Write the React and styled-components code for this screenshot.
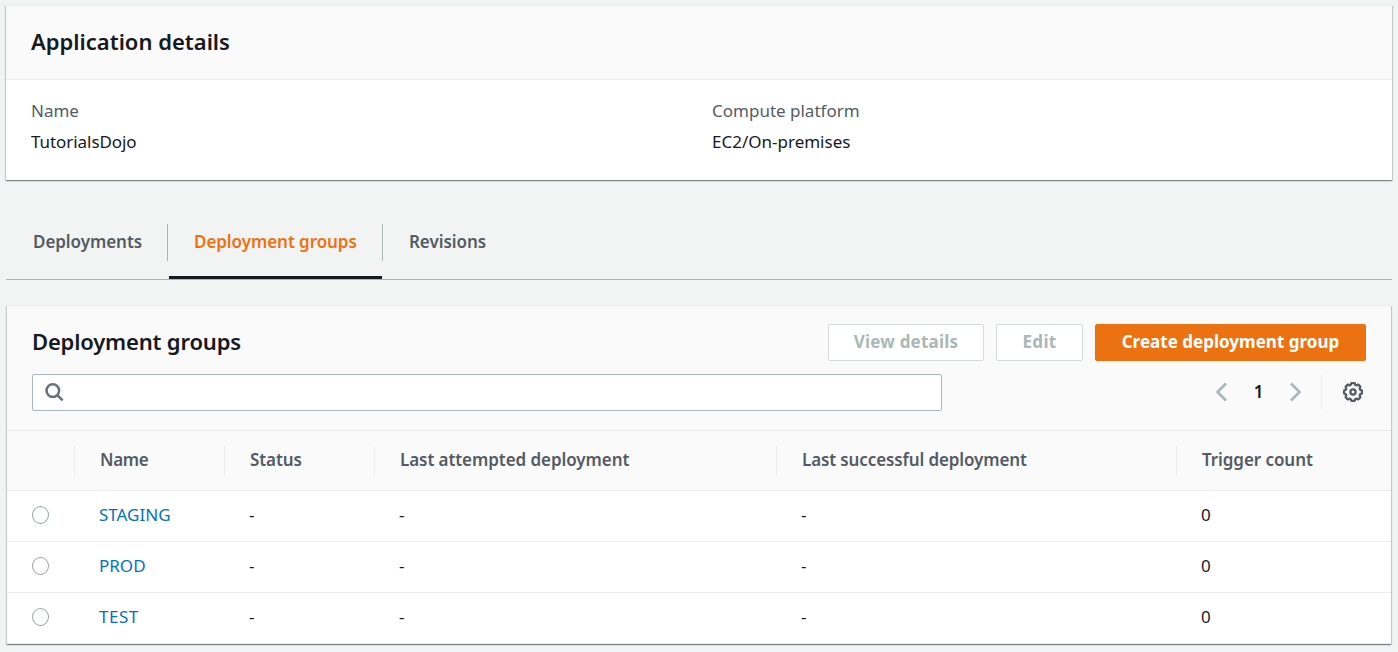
import React from 'react';
import styled, { createGlobalStyle, css } from 'styled-components';

const GlobalStyle = createGlobalStyle`
  *, *::before, *::after { box-sizing: border-box; }
  body {
    margin: 0;
    background: #f2f3f3;
    color: #16191f;
    font-family: "Noto Sans", "Open Sans", sans-serif;
    font-size: 17px;
    line-height: 24px;
  }
`;

const Page = styled.main`
  display: flex;
  flex-direction: column;
  height: 652px;
  padding: 5px 6px 0;
  overflow: hidden;
`;

const Card = styled.section`
  background: #fff;
  border-top: 1px solid #eaeded;
  box-shadow: 0 1px 1px 0 rgba(0, 28, 36, 0.3), 1px 1px 1px 0 rgba(0, 28, 36, 0.15),
    -1px 1px 1px 0 rgba(0, 28, 36, 0.15);
`;

const DetailsCard = styled(Card)`
  height: 175px;
`;

const GroupsCard = styled(Card)`
  height: 339px;
  margin: 25px 1px 0;
`;

const Title = styled.h2`
  margin: 0;
  font-size: 22px;
  line-height: 28px;
  font-weight: 600;
  letter-spacing: ${(p) => p.$tracking || 'normal'};
`;

const DetailsHeader = styled.header`
  height: 74px;
  padding: 21px 25px 0;
  background: #fafafa;
  border-bottom: 1px solid #eaeded;
`;

const DetailsGrid = styled.dl`
  display: grid;
  grid-template-columns: 681px 1fr;
  margin: 0;
  padding: 19px 25px 0;
`;

const Label = styled.dt`
  color: #545b64;
`;

const Value = styled.dd`
  margin: 7px 0 0;
  letter-spacing: ${(p) => p.$tracking || 'normal'};
`;

const TabList = styled.nav`
  display: flex;
  height: 56px;
  margin-top: 44px;
  border-bottom: 1px solid #aab7b8;
`;

const Tab = styled.a`
  width: ${(p) => p.$width}px;
  padding: 6px 0 0 ${(p) => p.$indent}px;
  font-weight: 600;
  letter-spacing: -0.06px;
  white-space: nowrap;
  color: ${(p) => (p.$active ? '#ec7211' : '#545b64')};
  ${(p) => p.$active && css`border-bottom: 3px solid #16191f;`}
`;

const TabDivider = styled.span`
  width: 1px;
  height: 37px;
  margin-right: ${(p) => p.$after || 0}px;
  background: #aab7b8;
`;

const GroupsHeader = styled.header`
  display: flex;
  flex-direction: column;
  gap: 13px;
  height: 125px;
  padding: 18px 25px 0;
  background: #fafafa;
  border-bottom: 1px solid #eaeded;
`;

const HeaderRow = styled.div`
  display: flex;
  justify-content: space-between;
  align-items: center;
  height: 37px;

  ${Title} {
    padding-bottom: 3px;
  }
`;

const Actions = styled.div`
  display: flex;
  gap: 12px;
`;

const Button = styled.button`
  width: ${(p) => p.$width}px;
  height: 37px;
  padding: 0 0 2px;
  border: 1px solid ${(p) => (p.$primary ? '#ec7211' : '#d5dbdb')};
  border-radius: 2px;
  background: ${(p) => (p.$primary ? '#ec7211' : '#fff')};
  color: ${(p) => (p.$primary ? '#fff' : '#aab7b8')};
  font: 700 17px/24px "Noto Sans", "Open Sans", sans-serif;
  letter-spacing: ${(p) => p.$tracking};
  white-space: nowrap;
`;

const Search = styled.label`
  display: flex;
  align-items: center;
  width: 910px;
  height: 37px;
  padding: 0 0 0 12px;
  border: 1px solid #aab7b8;
  border-radius: 2px;
  background: #fff;
`;

const SearchInput = styled.input`
  flex: 1;
  border: 0;
  outline: 0;
  background: transparent;
  font: inherit;
`;

const Controls = styled.div`
  display: flex;
  align-items: center;
  height: 37px;
  padding: 0 3px 1px 0;
`;

const PageNumber = styled.span`
  width: 62px;
  padding-left: 1px;
  font-weight: 600;
  text-align: center;
`;

const ControlDivider = styled.span`
  width: 1px;
  height: 36px;
  margin: 0 21px 0 20px;
  background: #eaeded;
`;

const columns = '67px 150px 150px 402px 400px 1fr';

const HeadRow = styled.div`
  display: grid;
  grid-template-columns: ${columns};
  align-items: center;
  height: 60px;
  background: #fafafa;
  border-bottom: 1px solid #eaeded;
`;

const HeadCell = styled.div`
  height: 30px;
  padding: 2px 0 0 25px;
  border-left: 1px solid ${(p) => (p.$blank ? 'transparent' : '#eaeded')};
  color: #545b64;
  font-weight: 600;
  white-space: nowrap;
  letter-spacing: ${(p) => p.$tracking || '-0.07px'};
`;

const Row = styled.div`
  display: grid;
  grid-template-columns: ${columns};
  align-items: center;
  height: 51px;
  border-bottom: 1px solid #eaeded;
`;

const Cell = styled.div`
  padding: 0 0 2px 25px;
`;

const Radio = styled.span`
  width: 17px;
  height: 18px;
  margin: 0 0 2px 25px;
  border: 1px solid #95a5a6;
  border-radius: 50%;
  background: #fff;
`;

const Link = styled.a`
  color: #0073bb;
  letter-spacing: ${(p) => p.$tracking || 'normal'};
`;

const Icon = styled.svg`
  display: block;
  flex: none;
  fill: none;
  stroke: ${(p) => p.$color};
  stroke-width: ${(p) => p.$stroke};
`;

const SearchIcon = () => (
  <Icon width="20" height="20" viewBox="0 0 20 20" $color="#687078" $stroke="2.5">
    <circle cx="7.8" cy="7.6" r="6.3" />
    <path d="M12.2 12 17.6 17.4" />
  </Icon>
);

const Chevron = ({ d }) => (
  <Icon width="12" height="20" viewBox="0 0 12 20" $color="#aab7b8" $stroke="2.6">
    <path d={d} />
  </Icon>
);

const gearOutline = () => {
  const points = [];
  const steps = 160;
  for (let i = 0; i < steps; i += 1) {
    const a = (i / steps) * Math.PI * 2;
    const r = 8.2 + 0.8 * Math.tanh(3 * (Math.cos(8 * a) + 0.35));
    points.push(`${(10 + r * Math.cos(a)).toFixed(2)} ${(10 + r * Math.sin(a)).toFixed(2)}`);
  }
  return `M${points.join('L')}Z`;
};

const GearIcon = () => (
  <Icon width="20" height="20" viewBox="0 0 20 20" $color="#545b64" $stroke="2.3">
    <path d={gearOutline()} strokeLinejoin="round" />
    <circle cx="10" cy="10" r="2.6" />
  </Icon>
);

const groups = [
  { name: 'STAGING' },
  { name: 'PROD' },
  { name: 'TEST', tracking: '0.5px' },
];

export default function App() {
  return (
    <>
      <GlobalStyle />
      <Page>
        <DetailsCard>
          <DetailsHeader>
            <Title>Application details</Title>
          </DetailsHeader>
          <DetailsGrid>
            <div>
              <Label>Name</Label>
              <Value $tracking="-0.06px">TutorialsDojo</Value>
            </div>
            <div>
              <Label>Compute platform</Label>
              <Value>EC2/On-premises</Value>
            </div>
          </DetailsGrid>
        </DetailsCard>

        <TabList>
          <Tab $width={161} $indent={27}>Deployments</Tab>
          <TabDivider $after={1} />
          <Tab $width={213} $indent={25} $active>Deployment groups</Tab>
          <TabDivider />
          <Tab $width={130} $indent={26}>Revisions</Tab>
        </TabList>

        <GroupsCard>
          <GroupsHeader>
            <HeaderRow>
              <Title $tracking="-0.18px">Deployment groups</Title>
              <Actions>
                <Button $width={156} $tracking="0.2px" disabled>View details</Button>
                <Button $width={87} $tracking="0.3px" disabled>Edit</Button>
                <Button $width={271} $tracking="0.02px" $primary>Create deployment group</Button>
              </Actions>
            </HeaderRow>
            <HeaderRow>
              <Search>
                <SearchIcon />
                <SearchInput aria-label="Search deployment groups" />
              </Search>
              <Controls>
                <Chevron d="M11 1.5 2.5 10 11 18.5" />
                <PageNumber>1</PageNumber>
                <Chevron d="M2 1.5 10.5 10 2 18.5" />
                <ControlDivider />
                <GearIcon />
              </Controls>
            </HeaderRow>
          </GroupsHeader>

          <HeadRow>
            <HeadCell $blank />
            <HeadCell $tracking="-0.3px">Name</HeadCell>
            <HeadCell>Status</HeadCell>
            <HeadCell>Last attempted deployment</HeadCell>
            <HeadCell $tracking="-0.12px">Last successful deployment</HeadCell>
            <HeadCell>Trigger count</HeadCell>
          </HeadRow>
          {groups.map(({ name, tracking }) => (
            <Row key={name}>
              <Radio />
              <Cell><Link $tracking={tracking}>{name}</Link></Cell>
              <Cell>-</Cell>
              <Cell>-</Cell>
              <Cell>-</Cell>
              <Cell>0</Cell>
            </Row>
          ))}
        </GroupsCard>
      </Page>
    </>
  );
}
